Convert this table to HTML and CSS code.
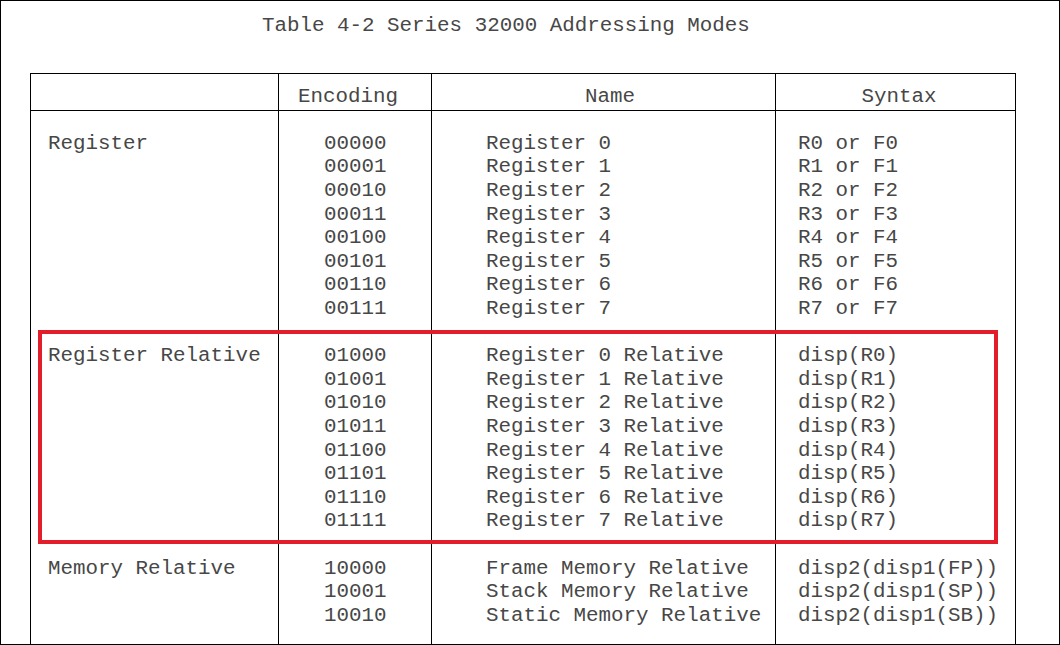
FILE: index.html
```html
<!DOCTYPE html>
<html>
<head>
<meta charset="utf-8">
<link rel="stylesheet" href="styles.css">
</head>
<body>
<div class="frame">
  <div class="title">Table 4-2 Series 32000 Addressing Modes</div>
  <div class="table">
    <div class="hcell c1"></div>
    <div class="hcell c2">Encoding</div>
    <div class="hcell c3">Name</div>
    <div class="hcell c4">Syntax</div>

    <div class="cell c1 g1"><span class="ln">Register</span></div>
    <div class="cell c2 g1">
      <span class="ln">00000</span><span class="ln">00001</span><span class="ln">00010</span><span class="ln">00011</span>
      <span class="ln">00100</span><span class="ln">00101</span><span class="ln">00110</span><span class="ln">00111</span>
    </div>
    <div class="cell c3 g1">
      <span class="ln">Register 0</span><span class="ln">Register 1</span><span class="ln">Register 2</span><span class="ln">Register 3</span>
      <span class="ln">Register 4</span><span class="ln">Register 5</span><span class="ln">Register 6</span><span class="ln">Register 7</span>
    </div>
    <div class="cell c4 g1">
      <span class="ln">R0 or F0</span><span class="ln">R1 or F1</span><span class="ln">R2 or F2</span><span class="ln">R3 or F3</span>
      <span class="ln">R4 or F4</span><span class="ln">R5 or F5</span><span class="ln">R6 or F6</span><span class="ln">R7 or F7</span>
    </div>

    <div class="cell c1 g2"><span class="ln">Register Relative</span></div>
    <div class="cell c2 g2">
      <span class="ln">01000</span><span class="ln">01001</span><span class="ln">01010</span><span class="ln">01011</span>
      <span class="ln">01100</span><span class="ln">01101</span><span class="ln">01110</span><span class="ln">01111</span>
    </div>
    <div class="cell c3 g2">
      <span class="ln">Register 0 Relative</span><span class="ln">Register 1 Relative</span><span class="ln">Register 2 Relative</span><span class="ln">Register 3 Relative</span>
      <span class="ln">Register 4 Relative</span><span class="ln">Register 5 Relative</span><span class="ln">Register 6 Relative</span><span class="ln">Register 7 Relative</span>
    </div>
    <div class="cell c4 g2">
      <span class="ln">disp(R0)</span><span class="ln">disp(R1)</span><span class="ln">disp(R2)</span><span class="ln">disp(R3)</span>
      <span class="ln">disp(R4)</span><span class="ln">disp(R5)</span><span class="ln">disp(R6)</span><span class="ln">disp(R7)</span>
    </div>

    <div class="cell c1 g3"><span class="ln">Memory Relative</span></div>
    <div class="cell c2 g3">
      <span class="ln">10000</span><span class="ln">10001</span><span class="ln">10010</span>
    </div>
    <div class="cell c3 g3">
      <span class="ln">Frame Memory Relative</span><span class="ln">Stack Memory Relative</span><span class="ln">Static Memory Relative</span>
    </div>
    <div class="cell c4 g3">
      <span class="ln">disp2(disp1(FP))</span><span class="ln">disp2(disp1(SP))</span><span class="ln">disp2(disp1(SB))</span>
    </div>
  </div>
  <div class="highlight"></div>
</div>
</body>
</html>
```

FILE: styles.css
```css
html, body {
  margin: 0;
  padding: 0;
  background: #ffffff;
}

.frame {
  position: relative;
  width: 1060px;
  height: 645px;
  box-sizing: border-box;
  border: 1px solid #000000;
  overflow: hidden;
  background: #ffffff;
  font-family: "Liberation Mono", "Courier New", monospace;
  font-size: 20.85px;
  line-height: 23.6px;
  color: #474747;
}

.title {
  padding: 13.3px 0 0 261px;
  height: 23.6px;
  white-space: pre;
}

.table {
  margin: 35px 0 0 29px;
  width: 986px;
  box-sizing: border-box;
  border: 1px solid #000000;
  display: grid;
  grid-template-columns: 247px 153px 344px 240px;
}

.hcell {
  height: 37px;
  box-sizing: border-box;
  padding-top: 11px;
  border-bottom: 1px solid #000000;
  white-space: nowrap;
}

.c2, .c3, .c4 {
  border-left: 1px solid #000000;
}

.hcell.c2 { padding-left: 19px; }
.hcell.c3 { padding-left: 153px; }
.hcell.c4 { padding-left: 85.5px; }

.cell {
  white-space: nowrap;
}

.cell.c1 { padding-left: 17px; }
.cell.c2 { padding-left: 45px; }
.cell.c3 { padding-left: 54px; }
.cell.c4 { padding-left: 22px; }

.g1 { padding-top: 21px; }
.g2 { padding-top: 23.6px; }
.g3 { padding-top: 23.6px; padding-bottom: 17.4px; }

.ln {
  display: block;
  height: 23.6px;
}

.highlight {
  position: absolute;
  left: 37px;
  top: 329px;
  width: 960px;
  height: 214px;
  box-sizing: border-box;
  border: 4.5px solid #e11e2a;
}
```
